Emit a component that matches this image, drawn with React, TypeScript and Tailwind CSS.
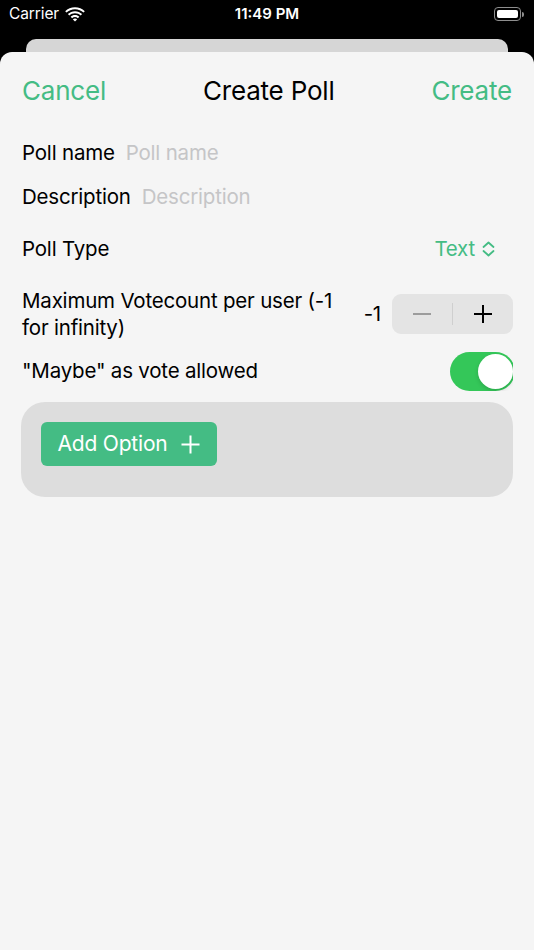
import React from "react";

const font = { fontFamily: "Inter, 'Noto Sans', 'Liberation Sans', sans-serif" };

function Wifi() {
  return (
    <svg width="20" height="15" viewBox="0 0 20 15" fill="white">
      <path d="M10 2.2c3.3 0 6.3 1.3 8.5 3.4l1.3-1.4C17.3 1.8 13.8.3 10 .3S2.7 1.8.2 4.2l1.3 1.4C3.7 3.5 6.7 2.2 10 2.2z" />
      <path d="M10 6.2c2.2 0 4.2.9 5.7 2.3l1.4-1.4C15.2 5.3 12.7 4.2 10 4.2S4.8 5.3 2.9 7.1l1.4 1.4C5.8 7.1 7.8 6.2 10 6.2z" />
      <path d="M10 10.1c1.1 0 2.1.4 2.9 1.1l1.4-1.4C13.2 8.8 11.7 8.1 10 8.1s-3.2.7-4.3 1.7l1.4 1.4c.8-.7 1.8-1.1 2.9-1.1z" />
      <path d="M10 14.6l2.1-2.1c-.5-.5-1.3-.9-2.1-.9s-1.6.4-2.1.9z" />
    </svg>
  );
}

function Battery() {
  return (
    <div className="flex items-center">
      <div className="w-[27px] h-[14px] rounded-[4px] border border-[#8e8e8e] p-[2px] flex">
        <div className="flex-1 bg-white rounded-[2px]" />
      </div>
      <div className="w-[2px] h-[5px] bg-[#8e8e8e] rounded-r-sm ml-[1px]" />
    </div>
  );
}

export default function App() {
  return (
    <div className="w-[534px] h-[950px] bg-black flex flex-col overflow-hidden" style={font}>
      {/* status bar */}
      <div className="h-[28px] flex items-center justify-between px-[9px] pr-[10px] text-white relative">
        <div className="flex items-center gap-[6px]">
          <span className="text-[15.5px] tracking-[-0.1px]">Carrier</span>
          <Wifi />
        </div>
        <span className="absolute left-0 right-0 text-center text-[15px] font-semibold">11:49 PM</span>
        <Battery />
      </div>
      <div className="h-[11px]" />
      {/* back card */}
      <div className="mx-[26px] h-[20px] bg-[#d6d6d6] rounded-t-[10px] -mb-[7px]" />
      {/* sheet */}
      <div className="flex-1 bg-[#f5f5f5] rounded-t-[12px] flex flex-col relative">
        <div className="flex items-center justify-between px-[22px] pt-[23px] text-[26px] leading-[31px] tracking-[-0.2px]">
          <span className="text-[#44bc84]">Cancel</span>
          <span className="text-black">Create Poll</span>
          <span className="text-[#44bc84]">Create</span>
        </div>

        <div className="px-[22px] pr-[21px] flex flex-col text-[20.5px] tracking-[-0.2px] text-black">
          <div className="mt-[33px] h-[28px] flex items-center gap-[11px] leading-[28px]">
            <span>Poll name</span>
            <span className="text-[#c5c5c7]">Poll name</span>
          </div>
          <div className="mt-[16px] h-[28px] flex items-center gap-[11px] leading-[28px]">
            <span>Description</span>
            <span className="text-[#c5c5c7]">Description</span>
          </div>
          <div className="mt-[24px] h-[28px] flex items-center justify-between leading-[28px]">
            <span>Poll Type</span>
            <span className="flex items-center gap-[7px] text-[#44bc84] pr-[18px]">
              Text
              <svg width="13" height="16" viewBox="0 0 13 16" fill="none" stroke="#44bc84" strokeWidth="1.8" strokeLinecap="round" strokeLinejoin="round">
                <path d="M1.5 6 6.5 1.5 11.5 6" />
                <path d="M1.5 10 6.5 14.5 11.5 10" />
              </svg>
            </span>
          </div>
          <div className="mt-[24px] flex items-center justify-between">
            <span className="leading-[27px] w-[330px]">Maximum Votecount per user (-1 for infinity)</span>
            <div className="flex items-center gap-[11px]">
              <span>-1</span>
              <div className="w-[121px] h-[40px] bg-[#e4e4e4] rounded-[9px] flex items-center">
                <div className="flex-1 flex items-center justify-center">
                  <div className="w-[18px] h-[2px] bg-[#9c9c9c]" />
                </div>
                <div className="w-[1px] h-[22px] bg-[#cfcfcf]" />
                <div className="flex-1 flex items-center justify-center">
                  <svg width="20" height="20" viewBox="0 0 20 20" stroke="black" strokeWidth="2">
                    <path d="M10 1v18M1 10h18" />
                  </svg>
                </div>
              </div>
            </div>
          </div>
          <div className="mt-[11px] h-[39px] flex items-center justify-between">
            <span>"Maybe" as vote allowed</span>
            <div className="w-[63px] h-[39px] overflow-hidden">
              <div className="w-[65px] h-[39px] bg-[#34c759] rounded-full flex items-center justify-end pr-[2px]">
                <div className="w-[35px] h-[35px] bg-white rounded-full shadow-[0_2px_4px_rgba(0,0,0,0.15)]" />
              </div>
            </div>
          </div>
        </div>

        <div className="mx-[21px] mt-[11px] h-[95px] bg-[#dddddd] rounded-[24px] px-[20px] pt-[20px]">
          <div className="w-[176px] h-[44px] bg-[#44bc84] rounded-[6px] flex items-center justify-center gap-[14px] text-white text-[21px] tracking-[-0.2px]">
            <span>Add Option</span>
            <svg width="19" height="19" viewBox="0 0 19 19" stroke="white" strokeWidth="2">
              <path d="M9.5 0.5v18M0.5 9.5h18" />
            </svg>
          </div>
        </div>
      </div>
    </div>
  );
}
